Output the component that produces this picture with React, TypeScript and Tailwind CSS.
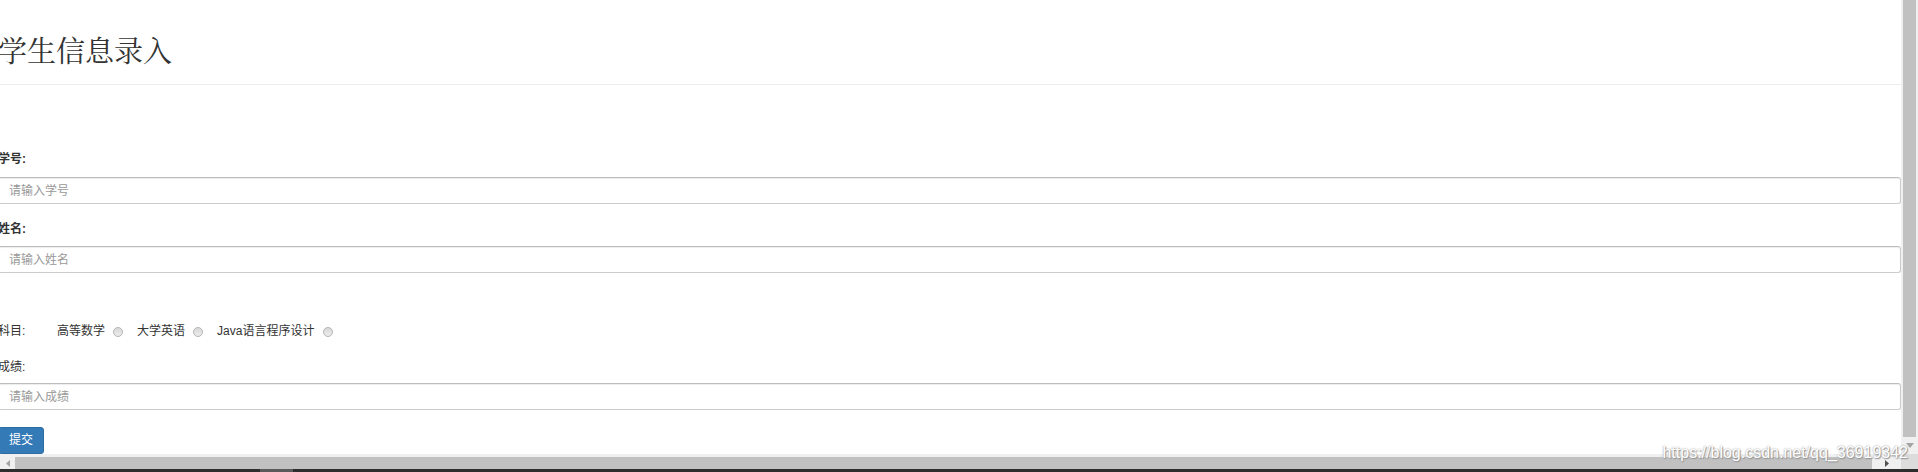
import React from 'react';

const sans = { fontFamily: '"Liberation Sans", "Noto Sans CJK SC", sans-serif' };

const Radio: React.FC = () => (
  <span className="inline-block w-[10px] h-[10px] rounded-full border border-[#b4b4b4] bg-gradient-to-b from-[#d8d8d8] to-[#ececec]" />
);

const Field: React.FC<{ placeholder: string }> = ({ placeholder }) => (
  <input
    type="text"
    placeholder={placeholder}
    className="block w-full h-[27px] px-[10px] border border-[#cccccc] border-t-[#bdbdbd] rounded-[3px] bg-white text-[12px] text-[#555] placeholder:text-[#999] shadow-[inset_0_1px_1px_rgba(0,0,0,0.075)] outline-none"
    style={sans}
  />
);

const VScroll: React.FC = () => (
  <div className="w-[17px] h-full bg-[#f0f0f0] flex flex-col">
    <div className="ml-[2px] w-[13px] h-[437px] bg-[#c1c1c1]" />
    <div className="flex-1 flex items-center justify-center">
      <svg width="8" height="5" viewBox="0 0 8 5">
        <path d="M0 0 L8 0 L4 5 Z" fill="#a3a3a3" />
      </svg>
    </div>
  </div>
);

const HScroll: React.FC = () => (
  <div className="h-[15px] flex bg-[#f0f0f0]">
    <div className="w-[15px] flex items-center justify-center pt-[3px]">
      <svg width="4" height="7" viewBox="0 0 4 7">
        <path d="M4 0 L4 7 L0 3.5 Z" fill="#a3a3a3" />
      </svg>
    </div>
    <div className="flex-1 pt-[3px]">
      <div className="h-full bg-[#c1c1c1]" />
    </div>
    <div className="w-[29px] flex items-center justify-center pt-[3px]">
      <svg width="4" height="7" viewBox="0 0 4 7">
        <path d="M0 0 L4 3.5 L0 7 Z" fill="#505050" />
      </svg>
    </div>
    <div className="w-[17px] bg-[#dcdcdc]" />
  </div>
);

export default function App() {
  return (
    <div className="relative w-[1918px] h-[472px] flex flex-col bg-white overflow-hidden text-[#333]" style={sans}>
      <div className="flex flex-1 min-h-0">
        <div className="flex-1 min-w-0 overflow-hidden">
          <div className="-ml-[2px]">
            <div className="h-[85px] pt-[36px] border-b border-[#eeeeee]">
              <h1
                className="text-[29px] leading-[28px] font-normal text-[#333]"
                style={{ fontFamily: '"Noto Serif CJK SC", "Liberation Serif", "Noto Sans CJK SC", serif' }}
              >
                学生信息录入
              </h1>
            </div>

            <form onSubmit={(e) => e.preventDefault()}>
              <div className="mt-[66px] h-[17px] leading-[17px] text-[12px] font-bold">学号:</div>
              <div className="mt-[9px]">
                <Field placeholder="请输入学号" />
              </div>

              <div className="mt-[17px] h-[17px] leading-[17px] text-[12px] font-bold">姓名:</div>
              <div className="mt-[8px]">
                <Field placeholder="请输入姓名" />
              </div>

              <div className="mt-[50px] h-[17px] flex items-center text-[12px] leading-[17px]">
                <span className="w-[59px]">科目:</span>
                <span>高等数学</span>
                <span className="ml-[8px] flex"><Radio /></span>
                <span className="ml-[14px]">大学英语</span>
                <span className="ml-[8px] flex"><Radio /></span>
                <span className="ml-[14px]">Java语言程序设计</span>
                <span className="ml-[9px] flex"><Radio /></span>
              </div>

              <div className="mt-[19px] h-[17px] leading-[17px] text-[12px]">成绩:</div>
              <div className="mt-[7px]">
                <Field placeholder="请输入成绩" />
              </div>

              <button
                type="submit"
                className="mt-[17px] h-[27px] px-[10px] bg-[#337ab7] border border-[#2e6da4] rounded-[3px] text-white text-[12px] leading-[25px]"
              >
                提交
              </button>
            </form>
          </div>
        </div>
        <VScroll />
      </div>
      <HScroll />
      <div className="h-[3px] bg-[#2d2d2d] flex">
        <div className="ml-[260px] w-[33px] bg-[#5a5a5a]" />
      </div>

      <div
        className="absolute right-[10px] top-[444px] text-[16px] leading-[18px] text-white [text-shadow:0_0_2px_#8a8a8a,1px_1px_1px_#9a9a9a]"
        style={{ fontFamily: '"Liberation Sans", sans-serif' }}
      >
        https://blog.csdn.net/qq_36919342
      </div>
    </div>
  );
}
